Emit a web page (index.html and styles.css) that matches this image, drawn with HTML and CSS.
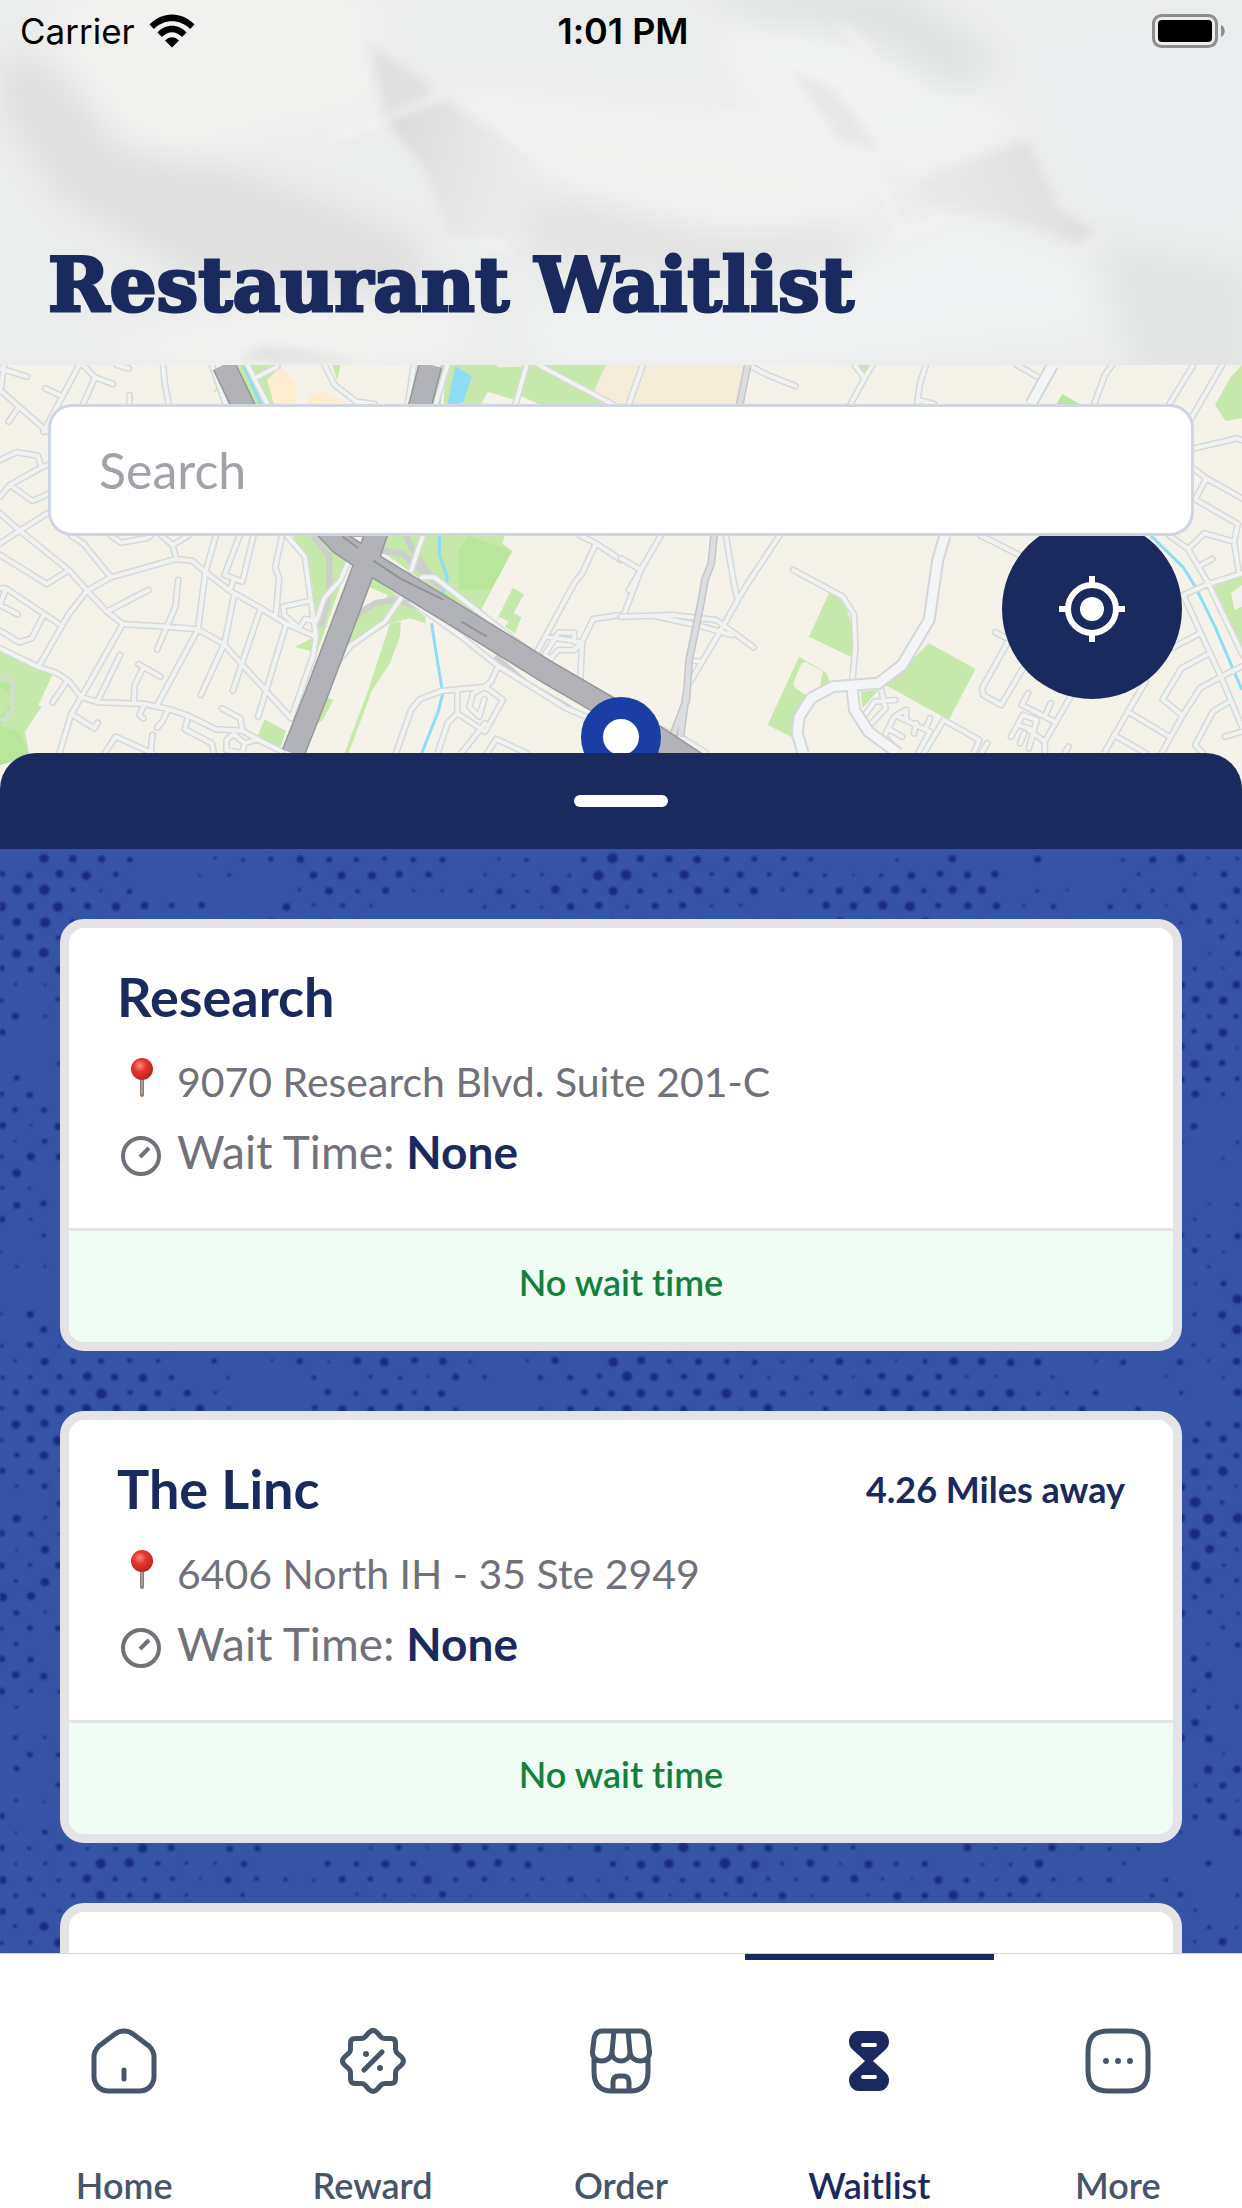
FILE: index.html
```html
<!DOCTYPE html>
<html lang="en">
<head>
    <meta charset="UTF-8">
    <meta name="viewport" content="width=device-width, initial-scale=1.0">
    <title>Restaurant Waitlist</title>
    <link rel="stylesheet" href="styles.css">
</head>
<body>
    <header class="header">
        <!-- Crumpled paper -->
        <svg class="paper" viewBox="0 0 1242 365" preserveAspectRatio="none" aria-hidden="true">
            <defs>
                <filter id="soft" x="-20%" y="-20%" width="140%" height="140%"><feGaussianBlur stdDeviation="16"/></filter>
                <filter id="crease" x="-10%" y="-10%" width="120%" height="120%"><feGaussianBlur stdDeviation="5"/></filter>
                <linearGradient id="foldLeft" x1="0" y1="0" x2="1" y2=".2">
                    <stop offset="0" stop-color="#d8d8d7"/>
                    <stop offset="1" stop-color="#e9e9e8" stop-opacity="0"/>
                </linearGradient>
                <linearGradient id="foldRight" x1="1" y1="0" x2="0" y2=".3">
                    <stop offset="0" stop-color="#d8d9d8"/>
                    <stop offset="1" stop-color="#e4e5e4" stop-opacity=".5"/>
                </linearGradient>
            </defs>
            <rect width="1242" height="365" fill="#ebedec"/>
            <g filter="url(#soft)">
                <path fill="#dfdfdf" d="M0 50L60 70L120 150L240 170L350 210L420 240L430 300L200 280L60 200L0 110Z"/>
                <path fill="#f1f1ef" d="M60 -10L370 -10L380 110L270 130L170 160L110 120L60 50Z"/>
                <path fill="#f2f3f1" d="M440 90L600 110L720 120L840 155L880 190L860 215L740 230L600 200L540 180Z"/>
                <path fill="#e1e2e1" d="M540 190L720 235L860 230L850 260L700 280L520 250Z"/>
                <path fill="#f2f3f3" d="M720 40L810 20L880 60L1020 125L940 170L870 160L760 110Z"/>
                <path fill="#dfe1e2" d="M700 -10L900 -10L1000 60L950 90L880 40L760 20Z"/>
                <path fill="#e9edee" d="M1030 40L1250 20L1250 240L1120 230L1060 140Z"/>
                <path fill="#e2e4e4" d="M1100 240L1250 270L1250 390L1140 390Z"/>
                <path fill="#f3f3f1" d="M90 350L220 325L330 300L480 320L440 350L250 370Z"/>
                <path fill="#eff1f2" d="M530 300L800 290L960 215L1080 260L1100 330L780 370L540 370Z"/>
            </g>
            <g filter="url(#crease)">
                <path fill="url(#foldLeft)" d="M385 120L445 100L580 190L620 225L450 235L425 170Z"/>
                <path fill="url(#foldRight)" d="M1028 140L1060 210L1095 230L1080 245L1010 220L910 200L930 175Z"/>
                <path fill="#e0e0e0" d="M370 45L425 80L435 100L385 120Z"/>
                <path fill="#e6e7e7" d="M790 70L835 90L880 150L840 140Z"/>
                <path fill="none" stroke="#f6f6f4" stroke-width="4" d="M330 140L385 120L440 95M720 112L840 150L885 190L900 235L950 215M480 240L510 250M840 25L870 50"/>
                <path fill="#e1e2e1" d="M240 362L260 345L300 350L360 362Z"/>
            </g>
        </svg>
        <div class="status-bar">
            <div class="carrier">
                <span>Carrier</span>
                <svg class="wifi" viewBox="0 0 46 34" aria-hidden="true">
                    <path d="M0.500 10.500C13 -3 33 -3 45.500 10.500L41 15C31 4.800 15 4.800 5 15ZM8.500 18.500C16 9.500 30 9.500 37.500 18.500L33 23C27 16.500 19 16.500 13 23ZM16 26.500C20 22 26 22 30 26.500L23 33.500Z"/>
                </svg>
            </div>
            <time class="clock">1:01 PM</time>
            <svg class="battery" viewBox="0 0 74 36" role="img" aria-label="Battery full">
                <rect x="1.500" y="2.500" width="63" height="31" rx="8" fill="none" stroke="#8c8d8e" stroke-width="3"/>
                <rect x="6" y="7" width="54" height="22" rx="4"/>
                <path d="M69 12C74 14 74 22 69 24Z" fill="#8c8d8e"/>
            </svg>
        </div>
        <h1 class="title">Restaurant Waitlist</h1>
    </header>

    <section class="map">
        <svg class="map-tiles" viewBox="0 0 1242 424" preserveAspectRatio="xMidYMin slice" aria-hidden="true">
            <defs>
                <path id="streets-west" d="M0 90L120 215M200 15L110 215M45 145L22 185M115 85L150 105M210 15L240 52L285 72M240 52L210 132M412 15L416 70L426 132M327 105V132M10 15L3 80M0 25L68 50M295 15L325 25M0 300L42 277L95 287L105 322L120 315M105 322L25 375L82 423L125 400M25 375L0 410M0 460L50 512L175 632L220 692L270 755L310 792L420 800L500 808L565 852L610 912L670 990L735 1075M0 550L50 512L120 460M0 585L118 672L172 632M180 527L210 550L280 652L220 692L172 765L155 800L97 920M280 652L445 597L485 602L520 637L580 692L655 742L720 790L798 830M445 597L436 555L408 527M436 555L475 527M280 527L305 548L370 535L380 527M0 685L15 685L155 797M15 685L0 735L45 763M110 765L80 835L48 847L0 812M270 755L375 690M450 660L443 740L397 868M545 527L518 640L500 808L397 1035M605 527L567 645L612 665L640 527M590 660L580 692M592 700L567 850L507 1005M658 745L588 992M722 795L652 1070M310 792L205 1012M303 885L247 1022M350 913L405 950M362 922L340 975L338 1030M0 865L95 920L145 940L175 965L205 1012L250 1027L365 1032L425 1047L475 1067L545 1108L612 1112L650 1138L712 1175M168 965L133 1027M205 1012L180 1062L150 1180M180 1062L238 1105L247 1088M365 1032L352 1065L362 1075M425 1047L410 1085L397 1103M560 1045L607 1075L612 1112M475 1067L467 1108L535 1150L540 1180M265 1180L292 1130L385 1180M380 1180L385 1125M650 1138L617 1150L590 1122L572 1140V1170L612 1180L617 1150M712 527L695 622L705 655L697 760M725 527L770 590L785 722L798 830L790 890L735 1075M785 722L715 740L718 765L755 805L770 777L797 785M885 590L860 660L818 715L800 780M1068 527L1038 632M1015 710L972 785L885 858L850 910L800 1030M1065 652L1098 652L1310 850L1460 970M1040 725L1165 830L1258 918L1430 1045L1480 1070M1258 918L1240 965L1225 980L1115 993L1060 1018L1038 1050L1000 1180M1155 990L1155 1060L1225 1115L1270 1020L1225 980L1195 1000L1185 1040L1210 1070L1223 1018M1155 1060L1130 1090L1105 1180M1225 1090L1165 1180M1230 1180L1253 1137L1330 1180M1465 527L1505 550L1470 640L1450 670L1352 885M1505 550L1568 600M1568 765L1498 777L1470 845L1465 970M1380 830L1470 847L1450 870H1410L1390 897L1375 885L1410 818H1450V845M820 15L845 75L900 125L945 132M1330 15L1302 132M1360 15L1550 135M625 15L675 132M650 50L700 20M535 15L570 132M1045 15L1030 132M1130 15L1100 132"/>
                <path id="streets-east" d="M55 15L20 132M330 20L370 45L440 78M590 15L615 55L580 132M615 55L635 15M770 15L755 70L748 132M752 120L790 132M1240 15L1222 45L1195 132M1445 15L1385 132M1518 15L1440 175M1000 15L1058 55M1447 265L1555 235L1568 240M1440 320L1478 355L1568 415M1478 355L1450 418L1558 492L1548 545L1560 635M1548 545L1473 520L1432 567M1385 527L1432 567L1483 670L1568 880M1462 617L1493 597M1568 640L1483 672L1420 705L1515 950L1568 1100M1462 820L1395 862M1483 882L1415 925L1368 1018L1418 1067M1568 920L1515 950L1462 985L1418 1067L1365 1180M1540 1022L1495 1055L1450 1155L1470 1180M1525 1130L1568 1115M1325 965L1280 1055L1385 1130M1280 1055L1220 1180M1245 1125L1325 1180M908 527L940 545L1005 585M945 817L975 835M975 850L912 985L915 1005L960 1035L1015 925M1135 1010L1070 1145V1180M1028 1000L1012 1035L1098 1087M1085 1030L1070 1070M1015 1065L985 1130M1015 1065L1050 1080M1002 1095L1040 1110M1050 1080L1030 1165M1030 1110L1070 1145M1008 1150L1018 1120M1130 1160L1120 1180M100 527L50 630L10 755M0 595L50 630L20 690M0 770L130 765L240 780L335 862M80 767L190 795L280 825M400 527L320 670L295 720L250 815L175 965M265 527L275 600L285 670L295 720M180 902L205 905M435 630L560 710L588 762L592 865L583 975M657 990L668 1045L625 1100M640 1025L692 1020M640 1025L610 1075M718 1050L690 1070L665 1130L690 1160M700 1070L780 1115L750 1180M740 1120L745 1090M780 1075L770 1105M680 1110L710 1130M720 1050V1080M815 1080L765 1180M815 1080L905 1140L890 1180M925 1150L910 1180M105 1110L150 1130L215 1180"/>
                <path id="avenues-east" d="M1090 15L1035 132M818 527L800 600L778 780L710 915L650 970L535 980L480 1015L450 1070L445 1120L460 1180M583 980L590 1050L625 1115L700 1180"/>
                <path id="rail" d="M320 15L300 132L235 527L228 610L212 660L200 740L172 900L165 1020L130 1130M165 1000L150 1130"/>
                <path id="highways-west" d="M565 15L612 132L700 350L860 550L935 610L1170 780L1380 935L1568 1065M1087 15L1062 132L930 590L870 780L800 1000L740 1180"/>
            </defs>
            <rect width="1242" height="424" fill="#f5f2e9"/>
            <g transform="translate(0 -5) scale(.396 .3333)">
                <path class="park" d="M0 875L132 945L97 1035L105 1040L63 1115L75 1190L0 1215ZM740 527L860 527L885 590L800 880L745 860L795 830L790 680L770 600ZM970 527H1275L1268 550L1293 572L1215 750L1250 795L1225 800L960 570ZM1250 790L1295 683L1323 703L1297 760L1317 772L1300 820L1275 800L1285 785L1260 770ZM985 790L1012 785L1010 830L985 910L940 990L880 1180H870L930 990ZM930 640L1075 770V790L1035 775L985 790L920 840L850 900L900 700ZM650 1130L668 1078L722 1112L705 1175ZM825 1012L842 1020L815 1080L790 1100ZM1125 15H1530L1500 95L1550 132H1360L1310 105L1295 118L1232 95L1215 132H1120ZM600 15H712L675 60L692 132H640ZM838 15H860L852 60ZM535 100L550 80V90Z"/>
                <path class="lawn" d="M0 1100L30 1010L0 980ZM0 1100L50 1115L75 1190L0 1215ZM1160 570L1185 527L1293 575L1240 690L1160 688ZM0 965L25 968V1050L0 1065Z"/>
                <path fill="#f5f2e9" d="M930 680L980 705L970 720L930 735L900 755Z"/>
                <path fill="#fdecd0" d="M675 60L710 22L745 70L752 132H692ZM780 112L820 95L880 132H778Z"/>
                <path fill="#f4ebd9" d="M1530 15H1568V132L1500 95ZM1255 15H1320V20L1255 22Z"/>
                <path fill="#8fdcf6" d="M1150 18L1192 50L1170 125L1155 132H1130Z"/>
                <path class="stream" d="M615 15L658 132M1110 527V585L1130 655L1115 710M1090 790L1100 870L1118 1000L1108 1050L1065 1180"/>
                <path class="stadium" d="M0 960L15 945L32 968L30 1050L10 1080L0 1080"/>
                <path class="ramp" d="M790 527L832 590L832 700L810 800M960 572L1015 580L1120 690M1025 527L1040 565L1085 645M870 820L910 757L950 728L1005 720L1050 740M1250 890L1330 970L1440 1045M1120 15L1105 132"/>
                <use href="#streets-west" class="street-edge"/>
                <use href="#streets-west" class="street"/>
                <use href="#highways-west" class="highway-edge"/>
                <use href="#highways-west" class="highway"/>
                <path class="median" d="M865 530L905 565M943 602L1010 655L1120 720M1165 785L1230 830M890 527H915"/>
            </g>
            <g transform="translate(621 -5) scale(.396 .3333)">
                <path fill="#f4ebd9" d="M0 15H310L292 132H0Z"/>
                <path class="park" d="M525 700L560 715L585 800V893L475 830ZM450 890L520 940L527 970L480 1010L450 1060L435 1133L370 1095ZM778 850L895 927L828 1080L668 975L720 915ZM605 995L650 990L610 1045ZM1568 15L1540 50L1500 135L1527 183L1568 175ZM1495 680L1568 645V900ZM590 15H630L615 45ZM145 775L190 785L200 795Z"/>
                <path class="lawn" d="M1115 102L1157 132H1100Z"/>
                <path fill="#f5f2e9" d="M465 905L510 935L503 975L510 985L475 1010L440 985L435 970L455 912ZM1568 675L1540 700L1550 750L1568 740Z"/>
                <path class="stream" d="M1338 527L1420 622L1450 680L1500 800L1568 990"/>
                <use href="#streets-east" class="street-edge"/>
                <use href="#streets-east" class="street"/>
                <use href="#avenues-east" class="avenue-edge"/>
                <use href="#avenues-east" class="avenue"/>
                <use href="#rail" class="rail-edge"/>
                <use href="#rail" class="rail"/>
                <path class="highway-edge" d="M-10 1055L190 1210"/>
                <path class="highway" d="M-10 1055L190 1210"/>
            </g>
            <circle cx="621" cy="372" r="29" fill="#fff" stroke="#1a3ea5" stroke-width="22"/>
        </svg>
        <input class="search" type="search" placeholder="Search" aria-label="Search">
        <button class="locate" type="button" aria-label="My location">
            <svg viewBox="0 0 72 72" aria-hidden="true">
                <circle cx="36" cy="36" r="24" fill="none" stroke="#fff" stroke-width="6"/>
                <circle cx="36" cy="36" r="12" fill="#fff"/>
                <path stroke="#fff" stroke-width="6" d="M36 3V11M36 61V69M3 36H11M61 36H69"/>
            </svg>
        </button>
    </section>

    <main class="sheet">
        <div class="sheet-header"><div class="handle"></div></div>
        <div class="locations">
            <svg class="halftone" viewBox="0 0 1242 1110" preserveAspectRatio="xMidYMin slice" aria-hidden="true"><g id="dots"></g></svg>
            <article class="card">
                <div class="card-body">
                    <div class="card-top">
                        <h2 class="name">Research</h2>
                    </div>
                    <p class="address">
                        <svg class="icon" viewBox="0 0 48 48" aria-hidden="true"><use href="#pin"/></svg>
                        9070 Research Blvd. Suite 201-C
                    </p>
                    <p class="wait">
                        <svg class="icon" viewBox="0 0 48 48" aria-hidden="true"><use href="#timer"/></svg>
                        <span>Wait Time: <strong>None</strong></span>
                    </p>
                </div>
                <p class="card-status">No wait time</p>
            </article>
            <article class="card">
                <div class="card-body">
                    <div class="card-top">
                        <h2 class="name">The Linc</h2>
                        <span class="distance">4.26 Miles away</span>
                    </div>
                    <p class="address">
                        <svg class="icon" viewBox="0 0 48 48" aria-hidden="true"><use href="#pin"/></svg>
                        6406 North IH - 35 Ste 2949
                    </p>
                    <p class="wait">
                        <svg class="icon" viewBox="0 0 48 48" aria-hidden="true"><use href="#timer"/></svg>
                        <span>Wait Time: <strong>None</strong></span>
                    </p>
                </div>
                <p class="card-status">No wait time</p>
            </article>
            <article class="card">
                <div class="card-body"></div>
            </article>
        </div>
    </main>

    <nav class="tabs">
        <a class="tab" href="#home">
            <svg viewBox="0 0 72 72" aria-hidden="true">
                <path d="M6 32C6 27 8 24 11 21L27 9C32 5 40 5 45 9L61 21C64 24 66 27 66 32V51C66 60 60 66 51 66H21C12 66 6 60 6 51ZM36 45V54"/>
            </svg>
            Home
        </a>
        <a class="tab" href="#reward">
            <svg viewBox="0 0 72 72" aria-hidden="true">
                <path d="M32 7.500Q36 3.500 40 7.500L44 12Q45.500 13.500 48 13.500H54Q58.500 13.500 58.500 18V24Q58.500 26.500 60 28L64.500 32Q68.500 36 64.500 40L60 44Q58.500 45.500 58.500 48V54Q58.500 58.500 54 58.500H48Q45.500 58.500 44 60L40 64.500Q36 68.500 32 64.500L28 60Q26.500 58.500 24 58.500H18Q13.500 58.500 13.500 54V48Q13.500 45.500 12 44L7.500 40Q3.500 36 7.500 32L12 28Q13.500 26.500 13.500 24V18Q13.500 13.500 18 13.500H24Q26.500 13.500 28 12ZM27 45L45 27"/>
                <circle class="dot" cx="29" cy="29" r="3"/>
                <circle class="dot" cx="43" cy="43" r="3"/>
            </svg>
            Reward
        </a>
        <a class="tab" href="#order">
            <svg viewBox="0 0 72 72" aria-hidden="true">
                <path d="M7.500 27L9 14Q10 6 18 6H54Q62 6 63 14L64.500 27C65 39 46 39 45 27C45 39 27 39 27 27C26 39 7 39 7.500 27ZM29 6L27 27M43 6L45 27M9 34V47C9 60 15 66 27 66H45C57 66 63 60 63 47V34M28 66V57Q28 51 34 51H38Q44 51 44 57V66"/>
            </svg>
            Order
        </a>
        <a class="tab active" href="#waitlist" aria-current="page">
            <svg viewBox="0 0 72 72" aria-hidden="true">
                <path class="solid" d="M26 6H46C52 6 56 11 56 17C56 21 54 23 52 25L40 36L52 47C54 49 56 51 56 55C56 61 52 66 46 66H26C20 66 16 61 16 55C16 51 18 49 20 47L32 36L20 25C18 23 16 21 16 17C16 11 20 6 26 6Z"/>
                <rect class="slot" x="28" y="18" width="16" height="4" rx="2"/>
                <rect class="slot" x="28" y="50" width="16" height="4" rx="2"/>
            </svg>
            Waitlist
        </a>
        <a class="tab" href="#more">
            <svg viewBox="0 0 72 72" aria-hidden="true">
                <path d="M6 27C6 12 12 6 27 6H45C60 6 66 12 66 27V45C66 60 60 66 45 66H27C12 66 6 60 6 45Z"/>
                <circle class="dot" cx="24" cy="36" r="3"/>
                <circle class="dot" cx="36" cy="36" r="3"/>
                <circle class="dot" cx="48" cy="36" r="3"/>
            </svg>
            More
        </a>
    </nav>

    <!-- Shared card icons -->
    <svg class="symbols" aria-hidden="true">
        <defs>
            <radialGradient id="pinHead" cx=".4" cy=".35" r=".7">
                <stop offset="0" stop-color="#ff8a80"/>
                <stop offset=".4" stop-color="#e3382f"/>
                <stop offset="1" stop-color="#b81f1c"/>
            </radialGradient>
            <symbol id="pin" viewBox="0 0 48 48">
                <path d="M25 20V37" stroke="#8b7d72" stroke-width="4" stroke-linecap="round"/>
                <path d="M25 20V36" stroke="#c9c0b8" stroke-width="1"/>
                <circle cx="25" cy="11" r="11" fill="url(#pinHead)"/>
            </symbol>
            <symbol id="timer" viewBox="0 0 48 48">
                <circle cx="24" cy="28" r="18" fill="none" stroke="#71717a" stroke-width="4"/>
                <path d="M23 29L32 20" stroke="#71717a" stroke-width="4"/>
            </symbol>
        </defs>
    </svg>
    <script src="script.js"></script>
</body>
</html>
```
FILE: styles.css
```css
* {
    box-sizing: border-box;
}

body {
    margin: 0;
    height: 100vh;
    display: flex;
    flex-direction: column;
    overflow: hidden;
    background-color: #fff;
    color: #1a2a5e;
    font-family: Lato, sans-serif;
    font-variant-ligatures: none;
}

h1, h2, p {
    margin: 0;
}

/* Header */
.header {
    position: relative;
    flex: none;
    height: 365px;
    display: flex;
    flex-direction: column;
    justify-content: space-between;
    padding-bottom: 40px;
}

.paper {
    position: absolute;
    inset: 0;
    z-index: -1;
    width: 100%;
    height: 100%;
}

.status-bar {
    display: grid;
    grid-template-columns: 1fr auto 1fr;
    align-items: center;
    height: 62px;
    padding: 0 16px 0 20px;
    color: #000;
    font-family: Inter, sans-serif;
    font-size: 35px;
}

.carrier {
    display: flex;
    align-items: center;
    gap: 14px;
}

.wifi {
    width: 46px;
    height: 34px;
}

.clock {
    font-size: 36px;
    font-weight: 600;
}

.battery {
    justify-self: end;
    width: 74px;
    height: 36px;
}

.title {
    padding: 0 48px;
    font-family: "DejaVu Serif", serif;
    font-size: 74px;
    line-height: 80px;
    white-space: nowrap;
    -webkit-text-stroke: 3px #1a2a5e;
}

/* Map */
.map {
    position: relative;
    z-index: 0;
    flex: none;
    height: 424px;
    padding: 39px 48px;
    overflow: hidden;
}

.map-tiles {
    position: absolute;
    inset: 0;
    z-index: -2;
    width: 100%;
    height: 100%;
}

.map-tiles path {
    vector-effect: non-scaling-stroke;
    stroke-linejoin: round;
}

.park { fill: #c6e8aa; }
.lawn { fill: #b8e69a; }
.stream { fill: none; stroke: #8fdcf6; stroke-width: 3px; }
.stadium { fill: none; stroke: #d5ddd0; stroke-width: 4px; }
.ramp { fill: none; stroke: #cdcfcd; stroke-width: 6px; }
.street-edge { fill: none; stroke: #d6d9d8; stroke-width: 7px; stroke-linecap: round; }
.street { fill: none; stroke: #f1f3f3; stroke-width: 4px; stroke-linecap: round; }
.avenue-edge { fill: none; stroke: #d5d7d9; stroke-width: 13px; }
.avenue { fill: none; stroke: #f4f5f7; stroke-width: 9px; }
.rail-edge { fill: none; stroke: #c4c5c9; stroke-width: 8px; }
.rail { fill: none; stroke: #dcdde1; stroke-width: 5px; }
.highway-edge { fill: none; stroke: #97979a; stroke-width: 24px; }
.highway { fill: none; stroke: #b2b3b9; stroke-width: 21px; }
.median { fill: none; stroke: #929396; stroke-width: 2px; }

.search {
    display: block;
    width: 100%;
    height: 132px;
    padding: 0 48px;
    border: 3px solid #cfd5e1;
    border-radius: 24px;
    background-color: #fff;
    color: #1a2a5e;
    font-family: inherit;
    font-size: 50px;
    appearance: none;
}

.search::placeholder {
    color: #a1a1aa;
    opacity: 1;
}

.locate {
    position: absolute;
    z-index: -1;
    top: 154px;
    right: 60px;
    width: 180px;
    height: 180px;
    display: flex;
    justify-content: center;
    align-items: center;
    border: 0;
    border-radius: 50%;
    background-color: #1a2a5e;
}

.locate svg {
    width: 72px;
    height: 72px;
}

/* Bottom sheet */
.sheet {
    position: relative;
    z-index: 1;
    flex: 1;
    min-height: 0;
    display: flex;
    flex-direction: column;
    margin-top: -36px;
}

.sheet-header {
    flex: none;
    height: 96px;
    display: flex;
    justify-content: center;
    align-items: center;
    border-radius: 36px 36px 0 0;
    background-color: #1a2a5e;
}

.handle {
    width: 94px;
    height: 12px;
    border-radius: 6px;
    background-color: #fff;
}

.locations {
    position: relative;
    z-index: 0;
    flex: 1;
    min-height: 0;
    display: flex;
    flex-direction: column;
    gap: 60px;
    padding: 70px 60px 0;
    overflow: hidden;
    background-color: #3654a5;
}

.halftone {
    position: absolute;
    inset: 0;
    z-index: -1;
    width: 100%;
    height: 100%;
    fill: #182c80;
    filter: blur(1px);
}

/* Cards */
.card {
    flex: none;
    border: 9px solid #e4e4e7;
    border-radius: 24px;
    background-color: #fff;
    overflow: hidden;
}

.card-body {
    display: flex;
    flex-direction: column;
    gap: 10px;
    min-height: 300px;
    padding: 34px 48px 46px;
}

.card-top {
    display: flex;
    justify-content: space-between;
    align-items: center;
    margin-bottom: 10px;
}

.name {
    font-size: 54px;
    line-height: 70px;
}

.distance {
    font-size: 36px;
    font-weight: 700;
}

.address,
.wait {
    display: flex;
    align-items: center;
    gap: 12px;
    color: #71717a;
    line-height: 60px;
}

.address {
    font-size: 41px;
}

.wait {
    font-size: 46px;
}

.wait strong {
    color: #1a2a5e;
}

.icon {
    flex: none;
    width: 48px;
    height: 48px;
}

.card-status {
    padding: 27px 0 36px;
    border-top: 3px solid #e4e4e7;
    background-color: #f0fdf4;
    color: #15803d;
    font-size: 36px;
    font-weight: 600;
    line-height: 48px;
    text-align: center;
}

/* Tab bar */
.tabs {
    position: relative;
    z-index: 2;
    flex: none;
    display: grid;
    grid-template-columns: repeat(5, 1fr);
    height: 255px;
    border-top: 1px solid #d4d4d8;
    background-color: #fff;
}

.tab {
    display: flex;
    flex-direction: column;
    align-items: center;
    gap: 66px;
    padding-top: 65px;
    border-top: 6px solid transparent;
    color: #475569;
    font-size: 36px;
    font-weight: 600;
    line-height: 44px;
    text-decoration: none;
}

.tab svg {
    width: 72px;
    height: 72px;
    fill: none;
    stroke: currentColor;
    stroke-width: 5px;
    stroke-linecap: round;
    stroke-linejoin: round;
}

.tab .dot,
.tab .solid {
    fill: currentColor;
    stroke: none;
}

.tab .slot {
    fill: #fff;
    stroke: none;
}

.tab.active {
    border-top-color: #1a2a5e;
    color: #1a2a5e;
}

.symbols {
    position: absolute;
    width: 0;
    height: 0;
}
```
FILE: script.js
```javascript
// Halftone dots behind the location cards
const dots = document.getElementById('dots');
const stepX = 28.4;
const stepY = 15.7;

let seed = 7;
function random() {
    seed = (seed * 16807) % 2147483647;
    return seed / 2147483647;
}

for (let row = 0; row < 72; row++) {
    for (let col = 0; col < 46; col++) {
        const x = 16 + col * stepX - (row % 2) * stepX / 2;
        const y = 10 + row * stepY;
        // slow waves leave empty patches between the dots
        const wave = Math.sin(x / 47 + y / 90) + Math.sin(y / 38 - x / 120);
        const size = 2 + wave * 0.7 + (random() - 0.5) * 3.4;
        if (size < 0.8) continue;
        const dot = document.createElementNS('http://www.w3.org/2000/svg', 'ellipse');
        dot.setAttribute('cx', x + random() * 2 - 1);
        dot.setAttribute('cy', y + random() * 2 - 1);
        dot.setAttribute('rx', size + 0.6);
        dot.setAttribute('ry', size + 0.4);
        dots.appendChild(dot);
    }
}
```
